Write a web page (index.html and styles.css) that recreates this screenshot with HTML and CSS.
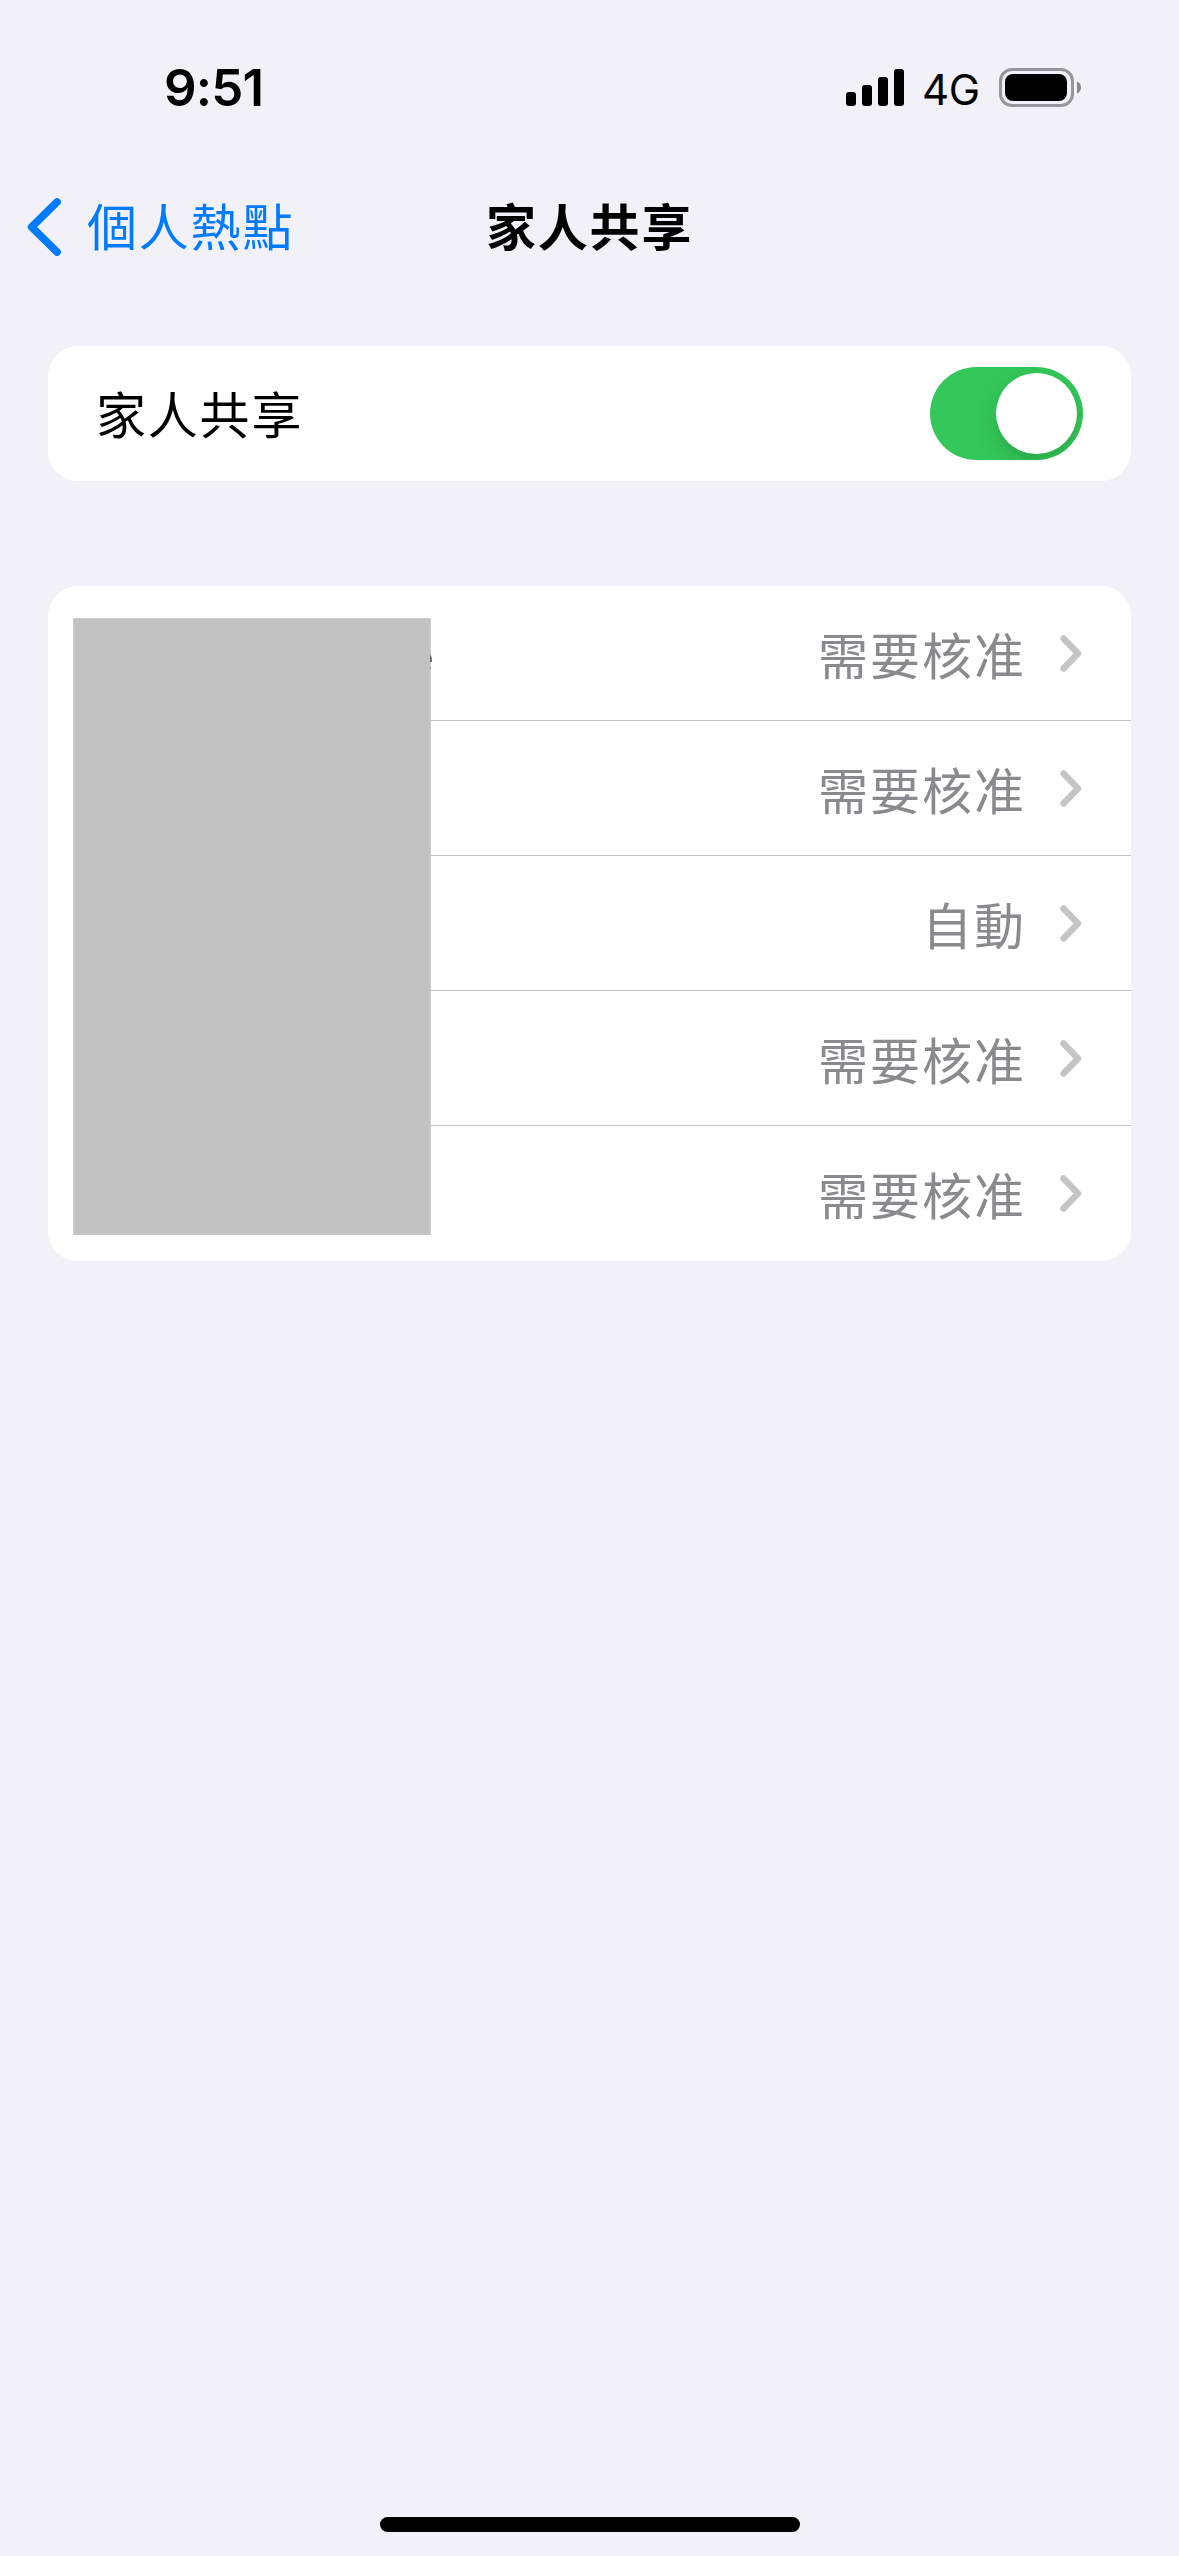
FILE: index.html
```html
<!DOCTYPE html>
<html lang="zh-Hant">
<head>
<meta charset="utf-8">
<title>家人共享</title>
<link rel="stylesheet" href="styles.css">
</head>
<body>
<div class="screen">
  <header class="status-bar">
    <span class="status-time">9:51</span>
    <div class="status-icons">
      <svg class="signal" width="58" height="37" viewBox="0 0 58 37">
        <rect x="0" y="23" width="10" height="14" rx="3"/>
        <rect x="16" y="16" width="10" height="21" rx="3"/>
        <rect x="32" y="8" width="10" height="29" rx="3"/>
        <rect x="48" y="0" width="10" height="37" rx="3"/>
      </svg>
      <span class="network">4G</span>
      <svg class="battery" width="82" height="39" viewBox="0 0 82 39">
        <rect x="1.5" y="1.5" width="72" height="36" rx="11.5" fill="none" stroke="#96959b" stroke-width="3"/>
        <rect x="6" y="6" width="62" height="27" rx="8"/>
        <path d="M78 13.5c2.500 1 4 3.300 4 6s-1.500 5-4 6z" fill="#88878d"/>
      </svg>
    </div>
  </header>
  <nav class="nav-bar">
    <a class="back">
      <svg class="back-icon" width="34" height="58" viewBox="0 0 34 58" fill="none"><path d="M30 4L4.600 29L30 54" stroke="#007aff" stroke-width="7.600" stroke-linecap="round" stroke-linejoin="round"/></svg>
      <span class="back-label">個人熱點</span>
    </a>
    <h1 class="title">家人共享</h1>
  </nav>
  <main class="content">
    <section class="card">
      <div class="row">
        <span class="label">家人共享</span>
        <span class="switch"><span class="knob"></span></span>
      </div>
    </section>
    <section class="card members">
      <div class="row"><span class="value">需要核准</span><svg class="chevron" width="22" height="37" viewBox="0 0 22 37"><path d="M3.500 3.500L18 18.500L3.500 33.500"/></svg></div>
      <div class="row"><span class="value">需要核准</span><svg class="chevron" width="22" height="37" viewBox="0 0 22 37"><path d="M3.500 3.500L18 18.500L3.500 33.500"/></svg></div>
      <div class="row"><span class="value">自動</span><svg class="chevron" width="22" height="37" viewBox="0 0 22 37"><path d="M3.500 3.500L18 18.500L3.500 33.500"/></svg></div>
      <div class="row"><span class="value">需要核准</span><svg class="chevron" width="22" height="37" viewBox="0 0 22 37"><path d="M3.500 3.500L18 18.500L3.500 33.500"/></svg></div>
      <div class="row"><span class="value">需要核准</span><svg class="chevron" width="22" height="37" viewBox="0 0 22 37"><path d="M3.500 3.500L18 18.500L3.500 33.500"/></svg></div>
      <div class="name-cover"><svg class="name-edge" width="2" height="15" viewBox="0 0 2 15"><path d="M0 0L2 4V8H0Z" fill="#707070"/><path d="M0 13h1v2h-1z" fill="#999"/></svg></div>
    </section>
  </main>
  <div class="home-indicator"></div>
</div>
</body>
</html>
```
FILE: styles.css
```css
* {
  box-sizing: border-box;
}

body {
  margin: 0;
  background: #f2f1f7;
  color: #000;
  font-family: Inter, "Noto Sans CJK TC", sans-serif;
}

.screen {
  width: 1179px;
  height: 2556px;
  display: flex;
  flex-direction: column;
  overflow: hidden;
}

.status-bar {
  height: 176px;
  padding: 0 98px 0 164px;
  display: flex;
  justify-content: space-between;
}

.status-time {
  margin-top: 58px;
  font-size: 51px;
  font-weight: 600;
  line-height: 60px;
  letter-spacing: -0.8px;
}

.status-icons {
  height: 39px;
  margin-top: 68px;
  display: flex;
  align-items: center;
}

.network {
  width: 60px;
  margin: 4px 17px 0 18px;
  font-size: 42px;
  line-height: 39px;
  font-weight: 400;
  letter-spacing: -0.5px;
}

.nav-bar {
  height: 102px;
  padding-left: 27px;
  display: grid;
  grid-template-columns: 459px auto 1fr;
  align-items: center;
  font-family: "Noto Sans CJK TC", sans-serif;
  font-size: 50px;
  line-height: 74px;
  letter-spacing: 1.8px;
}

.back {
  display: flex;
  align-items: center;
  gap: 26px;
  color: #007aff;
}

.back-label {
  padding-bottom: 6px;
}

.title {
  margin: 0;
  padding-bottom: 6px;
  font-size: inherit;
  font-weight: 600;
  white-space: nowrap;
}

.content {
  flex: 1;
  padding: 68px 48px 0;
  display: flex;
  flex-direction: column;
  gap: 105px;
}

.card {
  position: relative;
  background: #fff;
  border-radius: 30px;
}

.row {
  height: 135px;
  padding: 0 48px;
  display: flex;
  align-items: center;
  justify-content: space-between;
  font-family: "Noto Sans CJK TC", sans-serif;
  font-size: 50px;
  line-height: 74px;
  letter-spacing: 1.8px;
}

.label {
  padding-bottom: 3px;
}

.switch {
  width: 153px;
  height: 93px;
  padding: 6px;
  display: flex;
  justify-content: flex-end;
  border-radius: 47px;
  background: #34c759;
  overflow: hidden;
}

.knob {
  width: 81px;
  height: 81px;
  border-radius: 50%;
  background: #fff;
  box-shadow: 0 9px 24px rgba(0, 0, 0, 0.13), 0 6px 3px rgba(0, 0, 0, 0.03);
}

.members .row {
  justify-content: flex-end;
  gap: 34px;
  padding-bottom: 1px;
  background: linear-gradient(#c5c5c7, #c5c5c7) 48px 100% / 100% 1px no-repeat;
}

.members .row:nth-child(5) {
  background: none;
}

.value {
  color: #8a8a8e;
  letter-spacing: 2px;
}

.chevron {
  margin-right: 1px;
  fill: none;
  stroke: #c5c5c7;
  stroke-width: 6.5px;
  stroke-linecap: round;
  stroke-linejoin: round;
}

.name-cover {
  position: absolute;
  left: 25px;
  top: 32px;
  width: 358px;
  height: 617px;
  background: #c2c2c2;
  border: 1px solid #cbcbcb;
}

.name-edge {
  position: absolute;
  left: 356px;
  top: 35px;
}

.home-indicator {
  width: 420px;
  height: 15px;
  margin: 0 auto 24px;
  border-radius: 8px;
  background: #000;
}
```
